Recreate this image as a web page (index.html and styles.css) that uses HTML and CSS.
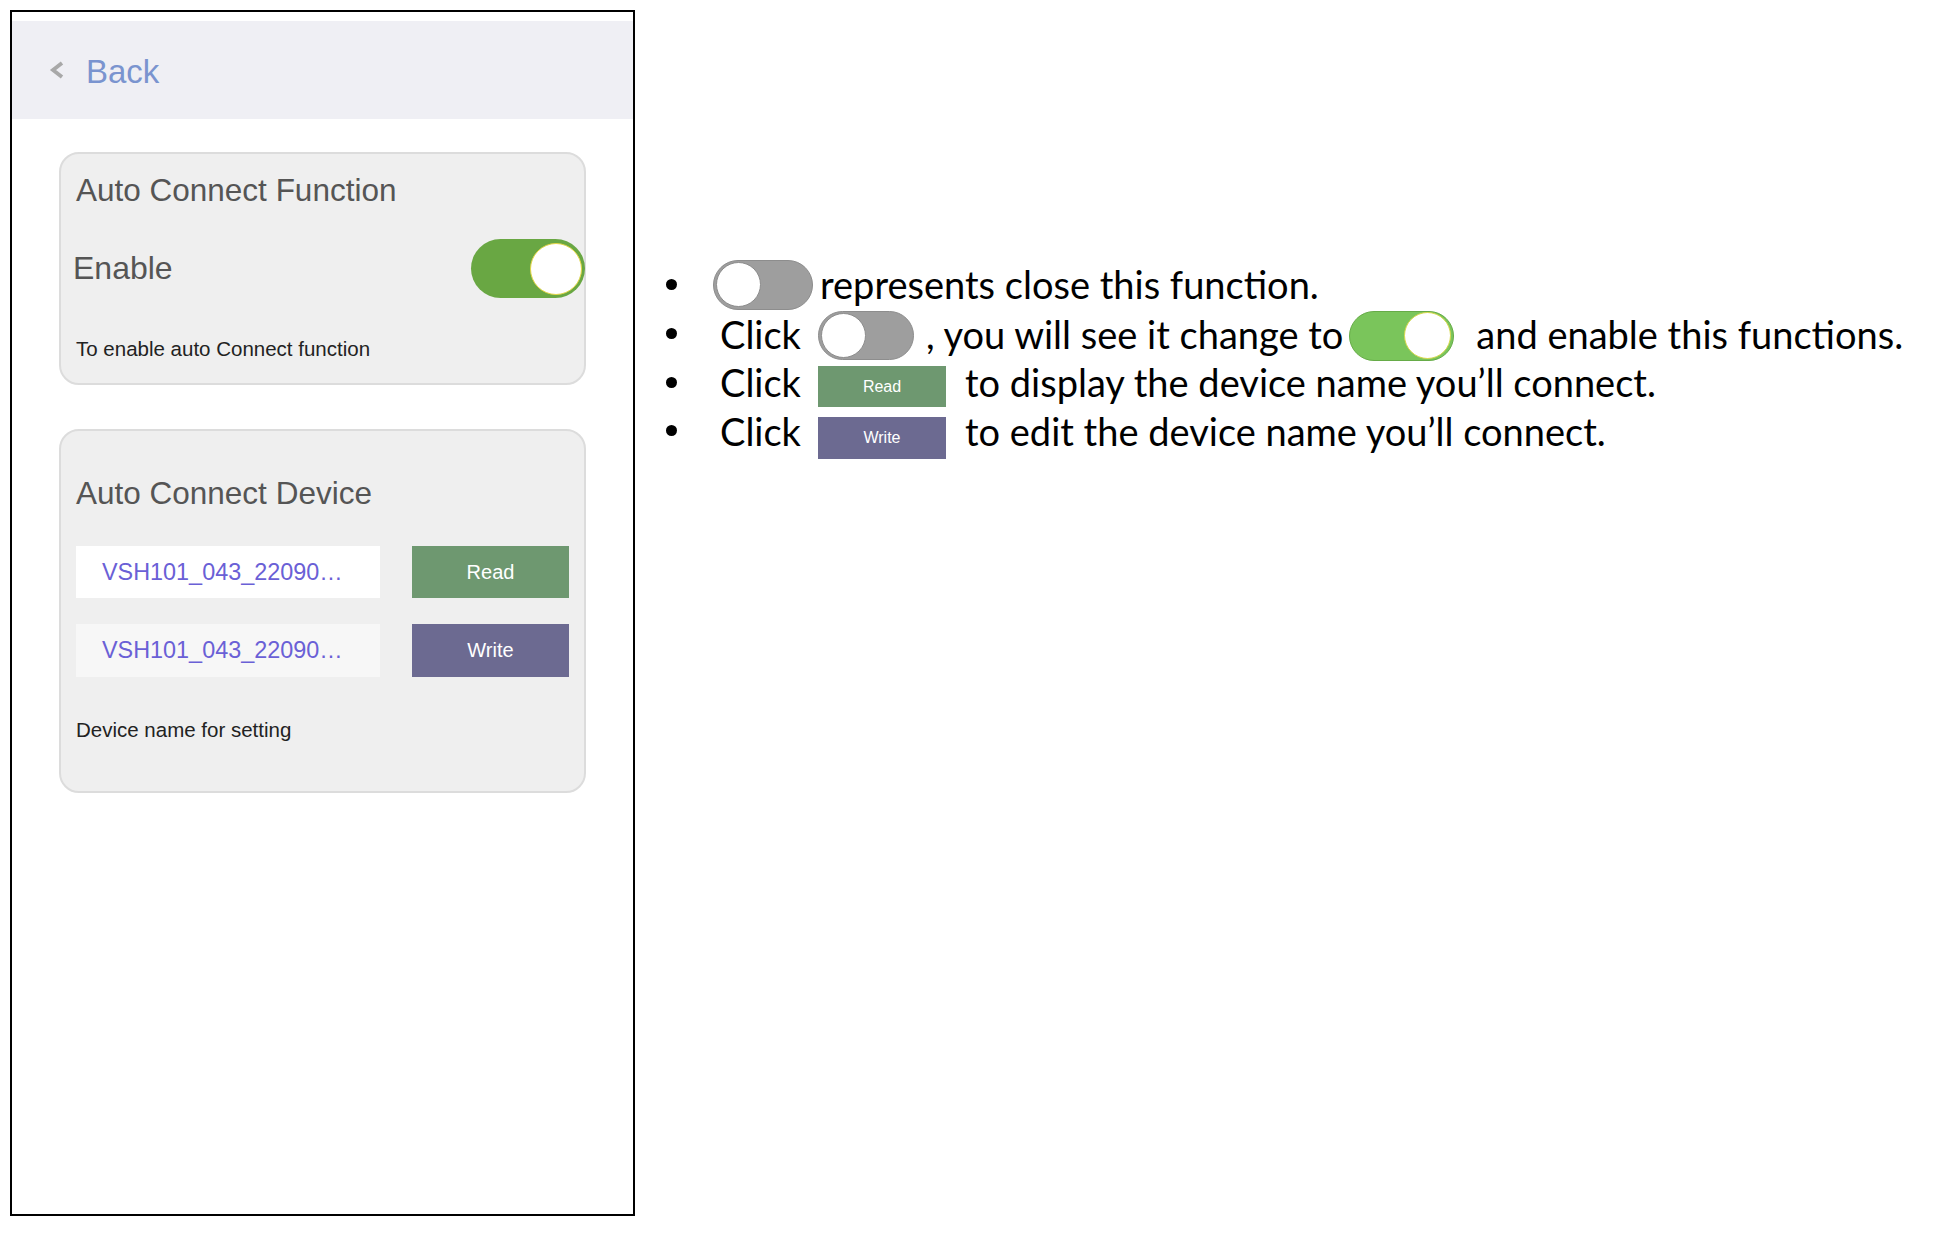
FILE: index.html
```html
<!DOCTYPE html>
<html lang="en">
<head>
    <meta charset="UTF-8">
    <meta name="viewport" content="width=device-width, initial-scale=1.0">
    <title>Auto Connect</title>
    <link rel="stylesheet" href="styles.css">
</head>
<body>
    <div class="page">
        <!-- Phone screen -->
        <div class="phone">
            <div class="nav">
                <svg class="chevron" viewBox="0 0 16 20">
                    <polyline points="13,3 4,10 13,17"></polyline>
                </svg>
                <span class="back">Back</span>
            </div>

            <div class="card card-function">
                <div class="card-title">Auto Connect Function</div>
                <div class="switch-row">
                    <span class="switch-label">Enable</span>
                    <span class="toggle toggle-on"><span class="knob"></span></span>
                </div>
                <div class="hint">To enable auto Connect function</div>
            </div>

            <div class="card card-device">
                <div class="card-title">Auto Connect Device</div>
                <div class="device-row">
                    <div class="field">VSH101_043_22090…</div>
                    <button class="btn btn-read">Read</button>
                </div>
                <div class="device-row row-write">
                    <div class="field field-edit">VSH101_043_22090…</div>
                    <button class="btn btn-write">Write</button>
                </div>
                <div class="hint hint-device">Device name for setting</div>
            </div>
        </div>

        <!-- Notes -->
        <ul class="notes">
            <li class="line-1">
                <span class="bullet"></span>
                <span class="mini-toggle"><span class="mini-knob"></span></span>
                <span class="note-text gap-s">represents close this function.</span>
            </li>
            <li class="line-2">
                <span class="bullet"></span>
                <span class="click">Click</span>
                <span class="mini-toggle narrow"><span class="mini-knob"></span></span>
                <span class="note-text gap-m">, you will see it change to</span>
                <span class="mini-toggle mini-on"><span class="mini-knob"></span></span>
                <span class="note-text gap-l">and enable this functions.</span>
            </li>
            <li class="line-3">
                <span class="bullet"></span>
                <span class="click">Click</span>
                <span class="mini-btn mini-read">Read</span>
                <span class="note-text gap-b">to display the device name you’ll connect.</span>
            </li>
            <li class="line-4">
                <span class="bullet"></span>
                <span class="click">Click</span>
                <span class="mini-btn mini-write">Write</span>
                <span class="note-text gap-b">to edit the device name you’ll connect.</span>
            </li>
        </ul>
    </div>
</body>
</html>
```

FILE: styles.css
```css
body {
    margin: 0;
    background: #fff;
    font-family: "Liberation Sans", Arial, sans-serif;
}
.page {
    display: flex;
    align-items: flex-start;
    padding: 10px 0 0 10px;
}

/* phone screen */
.phone {
    width: 625px;
    height: 1206px;
    box-sizing: border-box;
    border: 2px solid #000;
    padding-top: 9px;
}
.nav {
    height: 98px;
    background: #efeff4;
    display: flex;
    align-items: center;
    padding-left: 37px;
}
.chevron {
    width: 16px;
    height: 20px;
    margin-right: 21px;
    fill: none;
    stroke: #a8a8a8;
    stroke-width: 3.8;
}
.back {
    margin-top: 3px;
    font-size: 33px;
    color: #7a94cf;
}
.card {
    margin: 0 47px;
    background: #efefef;
    border: 2px solid #dcdcdc;
    border-radius: 20px;
    padding-left: 15px;
}
.card-function {
    margin-top: 33px;
    padding-top: 18px;
    padding-bottom: 22px;
}
.card-device {
    margin-top: 44px;
    padding-top: 44px;
    padding-bottom: 49px;
}
.card-title {
    font-size: 31.5px;
    line-height: 36px;
    color: #555;
}
.switch-row {
    margin-top: 31px;
    display: flex;
    align-items: center;
    justify-content: space-between;
}
.switch-label {
    margin-left: -3px;
    font-size: 32px;
    color: #555;
}
.toggle {
    width: 114px;
    height: 59px;
    margin-right: -1px;
    box-sizing: border-box;
    border-radius: 30px;
    background: #69a743;
    display: flex;
    align-items: center;
    justify-content: flex-end;
    padding-right: 3px;
}
.knob {
    width: 52px;
    height: 52px;
    box-sizing: border-box;
    border-radius: 50%;
    background: #fff;
    border: 1.5px solid #e4d646;
}
.hint {
    margin-top: 39px;
    font-size: 20.5px;
    line-height: 24px;
    color: #222;
}
.hint-device {
    margin-top: 41px;
}
.device-row {
    margin-top: 35px;
    display: flex;
    gap: 32px;
    height: 52px;
}
.row-write {
    margin-top: 26px;
    height: 53px;
}
.field {
    width: 304px;
    box-sizing: border-box;
    padding-left: 26px;
    background: #fff;
    color: #6a60d6;
    font-size: 23.4px;
    display: flex;
    align-items: center;
}
.field-edit {
    background: #f7f7f7;
}
.btn {
    width: 157px;
    border: none;
    color: #fff;
    font-family: "Liberation Sans", Arial, sans-serif;
    font-size: 20px;
}
.btn-read {
    background: #6e9870;
}
.btn-write {
    background: #6c6a91;
}

/* notes */
.notes {
    list-style: none;
    margin: 0 0 0 31px;
    padding: 249px 0 0;
    font-family: Lato, "Open Sans", sans-serif;
    font-size: 38px;
    color: #000;
}
.notes li {
    height: 51px;
    display: flex;
    align-items: center;
    white-space: nowrap;
}
.bullet {
    flex: none;
    width: 11px;
    height: 11px;
    border-radius: 50%;
    background: #000;
    margin-right: 36px;
}
.click {
    flex: none;
    width: 98px;
    margin-left: 7px;
}
/* the text sits a little off the widget centre on each line */
.line-1 .note-text {
    padding-bottom: 1px;
}
.line-1 .bullet {
    margin-bottom: 1px;
}
.line-2 .note-text,
.line-2 .click {
    padding-bottom: 4px;
}
.line-2 .bullet {
    margin-bottom: 4px;
}
.line-3 .note-text,
.line-3 .click {
    padding-bottom: 9px;
}
.line-3 .bullet {
    margin-bottom: 9px;
}
.line-4 .note-text,
.line-4 .click {
    padding-bottom: 14px;
}
.line-4 .bullet {
    margin-bottom: 14px;
}
.gap-s {
    margin-left: 7px;
}
.gap-m {
    margin-left: 12px;
}
.gap-b {
    margin-left: 19px;
}
.gap-l {
    margin-left: 22px;
}
.mini-toggle {
    flex: none;
    width: 100px;
    height: 50px;
    box-sizing: border-box;
    border-radius: 25px;
    background: #9e9e9e;
    border: 1.5px solid #8d8d8d;
    display: flex;
    align-items: center;
    padding-left: 2px;
}
.mini-toggle.narrow {
    width: 96px;
    height: 49px;
}
.mini-knob {
    width: 45px;
    height: 45px;
    box-sizing: border-box;
    border-radius: 50%;
    background: #fff;
    border: 1.5px solid #8d8d8d;
}
.mini-on {
    width: 105px;
    margin-left: 6px;
    background: #7ac55b;
    border-color: #66ab47;
    justify-content: flex-end;
    padding: 0 2px 0 0;
}
.mini-on .mini-knob {
    width: 47px;
    height: 47px;
    border-color: #d8d84a;
}
.mini-btn {
    flex: none;
    width: 128px;
    height: 41px;
    display: flex;
    align-items: center;
    justify-content: center;
    font-family: "Liberation Sans", Arial, sans-serif;
    font-size: 16px;
    color: #fff;
}
.mini-read {
    background: #6e9870;
}
.mini-write {
    height: 42px;
    background: #6c6a91;
}
```
